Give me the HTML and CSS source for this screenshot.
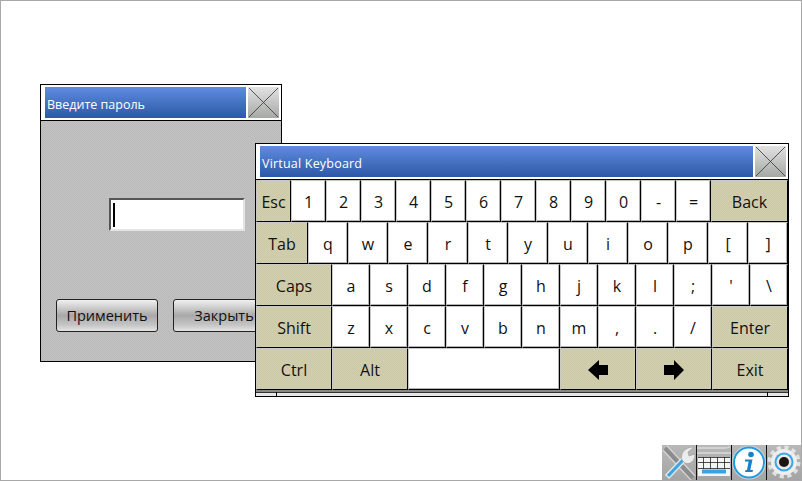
FILE: index.html
```html
<!DOCTYPE html>
<html lang="en">
    <head>
        <meta charset="UTF-8" />
        <meta name="viewport" content="width=device-width, initial-scale=1.0" />
        <title>Virtual Keyboard</title>
        <link rel="stylesheet" href="styles.css">
    </head>
    <body>
        <div class="desktop">
            <div class="window password">
                <div class="titlebar">
                    <div class="title">Введите пароль</div>
                    <div class="close">
                        <svg viewBox="0 0 31 31"><path d="M1 1L30 30M30 1L1 30" /></svg>
                    </div>
                </div>
                <div class="password-body">
                    <div class="input-row">
                        <div class="input"><span class="caret"></span></div>
                    </div>
                    <div class="button-row">
                        <button class="btn">Применить</button>
                        <button class="btn">Закрыть</button>
                    </div>
                </div>
            </div>

            <div class="window keyboard">
                <div class="titlebar">
                    <div class="title title-wide">Virtual Keyboard</div>
                    <div class="close">
                        <svg viewBox="0 0 31 31"><path d="M1 1L30 30M30 1L1 30" /></svg>
                    </div>
                </div>
                <div class="keys">
                    <div class="row row-1">
                        <div class="key fn">Esc</div>
                        <div class="key">1</div>
                        <div class="key">2</div>
                        <div class="key">3</div>
                        <div class="key">4</div>
                        <div class="key">5</div>
                        <div class="key">6</div>
                        <div class="key">7</div>
                        <div class="key">8</div>
                        <div class="key">9</div>
                        <div class="key">0</div>
                        <div class="key">-</div>
                        <div class="key">=</div>
                        <div class="key fn">Back</div>
                    </div>
                    <div class="row row-2">
                        <div class="key fn">Tab</div>
                        <div class="key">q</div>
                        <div class="key">w</div>
                        <div class="key">e</div>
                        <div class="key">r</div>
                        <div class="key">t</div>
                        <div class="key">y</div>
                        <div class="key">u</div>
                        <div class="key">i</div>
                        <div class="key">o</div>
                        <div class="key">p</div>
                        <div class="key">[</div>
                        <div class="key">]</div>
                    </div>
                    <div class="row row-3">
                        <div class="key fn">Caps</div>
                        <div class="key">a</div>
                        <div class="key">s</div>
                        <div class="key">d</div>
                        <div class="key">f</div>
                        <div class="key">g</div>
                        <div class="key">h</div>
                        <div class="key">j</div>
                        <div class="key">k</div>
                        <div class="key">l</div>
                        <div class="key">;</div>
                        <div class="key">'</div>
                        <div class="key">\</div>
                    </div>
                    <div class="row row-4">
                        <div class="key fn">Shift</div>
                        <div class="key">z</div>
                        <div class="key">x</div>
                        <div class="key">c</div>
                        <div class="key">v</div>
                        <div class="key">b</div>
                        <div class="key">n</div>
                        <div class="key">m</div>
                        <div class="key">,</div>
                        <div class="key">.</div>
                        <div class="key">/</div>
                        <div class="key fn">Enter</div>
                    </div>
                    <div class="row row-5">
                        <div class="key fn">Ctrl</div>
                        <div class="key fn">Alt</div>
                        <div class="key"></div>
                        <div class="key fn">
                            <svg class="arrow" viewBox="0 0 20 20"><path d="M0 10L11 0V5H20V15H11V20Z" /></svg>
                        </div>
                        <div class="key fn">
                            <svg class="arrow" viewBox="0 0 20 20"><path d="M20 10L10 0V5H0V15H10V20Z" /></svg>
                        </div>
                        <div class="key fn">Exit</div>
                    </div>
                </div>
                <div class="scrollbar">
                    <div class="scroll-end"></div>
                    <div class="scroll-track"></div>
                    <div class="scroll-end"></div>
                </div>
            </div>

            <div class="tray">
                <div class="tray-icon">
                    <svg viewBox="0 0 34 35">
                        <path d="M3 3L31 33" stroke="#d6d6d6" stroke-width="7" />
                        <path d="M3 3L31 33" stroke="#8c8c8c" stroke-width="4.5" />
                        <path d="M5 32L24 12" stroke="#e6e6e6" stroke-width="6" />
                        <path d="M6 31L23 13" stroke="#3aa6e6" stroke-width="3.2" />
                        <path d="M20 15C18 8 23 2 32 2L26 7L27 11L33 9C33 16 28 20 23 18Z" fill="#ececec" stroke="#999" stroke-width="0.6" />
                    </svg>
                </div>
                <div class="tray-icon">
                    <svg viewBox="0 0 34 35">
                        <path d="M0 3H28M0 8H34" stroke="#dcdcdc" stroke-width="1.5" />
                        <path d="M28 3C30 3 32 2.5 33 1.5" stroke="#e8e8e8" fill="none" />
                        <rect x="1" y="12" width="32" height="19" fill="#f4f4f4" />
                        <path d="M1 12.5H33M1 17.5H33M1 23.5H33M6.5 12V24M13.5 12V24M20.5 12V24M27.5 12V24" stroke="#222" stroke-width="0.8" fill="none" />
                        <rect x="5" y="24.5" width="24" height="4" fill="#3aa2de" />
                    </svg>
                </div>
                <div class="tray-icon">
                    <svg viewBox="0 0 34 35">
                        <circle cx="17" cy="17.5" r="17" fill="#cfcfcf" />
                        <circle cx="17" cy="17.5" r="15" fill="#fff" stroke="#1f9be0" stroke-width="2" />
                        <circle cx="19" cy="9.5" r="2.8" fill="#1b7fc8" />
                        <path d="M13 14.5H20.5L18.3 25H21L20.5 27H13L13.5 25H15L16.6 16.5H13Z" fill="#1b7fc8" />
                    </svg>
                </div>
                <div class="tray-icon">
                    <svg viewBox="0 0 34 35">
                        <circle cx="17" cy="17" r="14" fill="none" stroke="#e2e2e2" stroke-width="5" stroke-dasharray="4 3.33" />
                        <circle cx="17" cy="17" r="13" fill="#eeeeee" />
                        <circle cx="17" cy="17" r="9.5" fill="#3aa6e6" />
                        <circle cx="17" cy="17" r="7.5" fill="#e8e8e8" />
                        <circle cx="17" cy="17" r="5" fill="#1c1410" />
                    </svg>
                </div>
            </div>
        </div>
    </body>
</html>
```

FILE: styles.css
```css
* {
    box-sizing: border-box;
}
body {
    font-family: "Open Sans", "Noto Sans", sans-serif;
    margin: 0;
    background: white;
}
.desktop {
    position: relative;
    width: 802px;
    height: 481px;
    overflow: hidden;
    border: 1px solid #a8a8a8;
}
.window {
    position: absolute;
    background: white;
    border: 1px solid black;
}
.password {
    left: 39px;
    top: 83px;
    width: 242px;
    height: 278px;
}
.keyboard {
    left: 254px;
    top: 142px;
    width: 534px;
    height: 254px;
}

.titlebar {
    display: flex;
    gap: 2px;
    height: 36px;
    padding: 2px 2px 2px 4px;
    border-bottom: 1px solid black;
}
.title {
    flex: 1;
    display: flex;
    align-items: center;
    padding: 3px 0 0 2px;
    color: white;
    font-size: 12.5px;
    background: linear-gradient(#5f8ce0, #2d58a6);
}
.title-wide {
    letter-spacing: 0.2px;
}
.close {
    width: 31px;
    background: linear-gradient(#e2e2e2, #a5a8a5);
}
.close svg {
    display: block;
    width: 31px;
    height: 31px;
}
.close path {
    stroke: #333;
    stroke-width: 0.8;
    fill: none;
}

.password-body {
    height: 240px;
    padding-top: 77px;
    background: repeating-conic-gradient(#c1c1c1 0 25%, #bbbbbb 0 50%) 0 0 / 2px 2px;
}
.input-row {
    padding-left: 68px;
}
.input {
    display: flex;
    align-items: center;
    width: 136px;
    height: 33px;
    padding-left: 2px;
    background: white;
    border: 2px solid;
    border-color: #555 #e4e4e4 #e4e4e4 #555;
}
.caret {
    width: 2px;
    height: 24px;
    background: black;
}
.button-row {
    display: flex;
    gap: 15px;
    margin-top: 68px;
    padding-left: 15px;
}
.btn {
    width: 102px;
    height: 33px;
    padding: 0;
    font-family: inherit;
    font-size: 14.5px;
    color: #111;
    background: linear-gradient(#f0f0f0, #a9a9a9 50%, #c4c4c4 80%, #e4e4e4);
    border: 1px solid #222;
    border-radius: 3px;
}

.keys {
    display: flex;
    flex-direction: column;
}
.row {
    display: grid;
    height: 42px;
}
.row-1 {
    grid-template-columns: repeat(13, 35px) 77px;
}
.row-2 {
    grid-template-columns: 52px repeat(12, 40px);
}
.row-3 {
    grid-template-columns: 76px repeat(12, 38px);
}
.row-4 {
    grid-template-columns: 76px repeat(10, 38px) 76px;
}
.row-5 {
    grid-template-columns: 76px 76px 152px 76px 76px 76px;
}
.key {
    display: flex;
    align-items: center;
    justify-content: center;
    padding-top: 2px;
    font-size: 16px;
    color: #111;
    background: white;
    border: 1px solid black;
    border-color: #c8c8c8 black black #c8c8c8;
    box-shadow: inset -1px -1px 0 #b4b4b4;
}
.fn {
    background: repeating-conic-gradient(#d2cfb0 0 25%, #ccc9a6 0 50%) 0 0 / 2px 2px;
    box-shadow: none;
}
.arrow {
    width: 20px;
    height: 20px;
    fill: black;
}

.scrollbar {
    display: flex;
    height: 6px;
    border-top: 2px solid #888;
    background: #e6e6e6;
    box-shadow: inset 0 1px 0 #333;
}
.scroll-end {
    width: 21px;
    border-right: 1px solid black;
}
.scroll-end:last-child {
    border-right: 0;
    border-left: 1px solid black;
}
.scroll-track {
    flex: 1;
}

.tray {
    position: absolute;
    right: 0;
    bottom: 0;
    display: flex;
    gap: 1px;
    height: 35px;
    background: #111;
}
.tray-icon {
    width: 34px;
    background: linear-gradient(#b8b8b8, #a4a4a4);
}
.tray-icon svg {
    display: block;
    width: 34px;
    height: 35px;
}
```
